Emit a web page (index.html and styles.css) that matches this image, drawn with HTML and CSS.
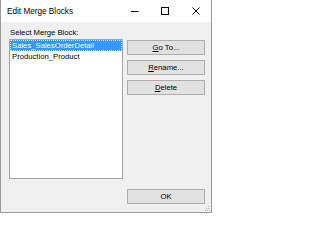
FILE: index.html
```html
<!DOCTYPE html>
<html>
<head>
<meta charset="utf-8">
<link rel="stylesheet" href="styles.css">
</head>
<body>
<div class="window">
  <div class="titlebar">
    <span class="title">Edit Merge Blocks</span>
    <div class="controls">
      <span class="ctl"><svg width="8" height="8" viewBox="0 0 8 8"><path d="M0 4.5H7.5" stroke="#000" stroke-width="1"/></svg></span>
      <span class="ctl"><svg width="9" height="9" viewBox="0 0 9 9"><rect x="0.5" y="0.5" width="7" height="7" fill="none" stroke="#000" stroke-width="1"/></svg></span>
      <span class="ctl"><svg width="9" height="9" viewBox="0 0 9 9"><path d="M0.5 0.5L7.5 7.5M7.5 0.5L0.5 7.5" stroke="#000" stroke-width="1"/></svg></span>
    </div>
  </div>
  <div class="content">
    <div class="leftcol">
      <div class="label">Select Merge Block:</div>
      <div class="listbox">
        <div class="item selected">Sales_SalesOrderDetail</div>
        <div class="item">Production_Product</div>
      </div>
    </div>
    <div class="rightcol">
      <div class="btngroup">
        <div class="btn"><u>G</u>o To...</div>
        <div class="btn"><u>R</u>ename...</div>
        <div class="btn"><u>D</u>elete</div>
      </div>
      <div class="btn">OK</div>
    </div>
  </div>
  <svg class="grip" width="5" height="5" viewBox="0 0 5 5">
    <rect x="3" y="0" width="1" height="1" fill="#b0b0b0"/>
    <rect x="1" y="2" width="1" height="1" fill="#b0b0b0"/>
    <rect x="3" y="2" width="1" height="1" fill="#b0b0b0"/>
    <rect x="0" y="4" width="1" height="1" fill="#b0b0b0"/>
    <rect x="2" y="4" width="1" height="1" fill="#b0b0b0"/>
    <rect x="4" y="4" width="1" height="1" fill="#b0b0b0"/>
  </svg>
</div>
</body>
</html>
```
FILE: styles.css
```css
html, body {
  margin: 0;
  padding: 0;
  background: #ffffff;
}
body {
  width: 214px;
  height: 214px;
  font-family: "Liberation Sans", Arial, sans-serif;
  color: #000;
}
.window {
  position: relative;
  box-sizing: border-box;
  width: 212px;
  height: 213px;
  border: 1px solid #9a9a9a;
  border-top: none;
  background: #f0f0f0;
  display: flex;
  flex-direction: column;
}
.titlebar {
  height: 22px;
  background: #ffffff;
  display: flex;
  align-items: center;
  justify-content: space-between;
  padding-left: 6px;
}
.title {
  font-size: 8.2px;
  line-height: 10px;
  padding-top: 1px;
}
.controls {
  display: flex;
  align-items: center;
  height: 22px;
}
.ctl {
  width: 31px;
  height: 22px;
  display: flex;
  align-items: center;
  justify-content: center;
}
.controls .ctl:last-child {
  width: 30px;
}
.content {
  flex: 1;
  display: flex;
  padding: 4px 6px 8px 8px;
  font-size: 7.7px;
}
.leftcol {
  display: flex;
  flex-direction: column;
  width: 114px;
}
.label {
  height: 13px;
  line-height: 13px;
  padding-left: 1px;
}
.listbox {
  box-sizing: border-box;
  width: 114px;
  height: 140px;
  background: #ffffff;
  border: 1px solid #a5a5a5;
}
.item {
  height: 11px;
  line-height: 11px;
  padding-left: 2px;
  white-space: nowrap;
}
.item.selected {
  background: #3399ff;
  color: #ffffff;
  outline: 1px dotted #cfe6ff;
  outline-offset: -1px;
}
.rightcol {
  margin-left: 4px;
  width: 78px;
  display: flex;
  flex-direction: column;
  justify-content: space-between;
  padding-top: 14px;
}
.btngroup {
  display: flex;
  flex-direction: column;
  gap: 5px;
}
.btn {
  box-sizing: border-box;
  height: 15px;
  background: #e1e1e1;
  border: 1px solid #adadad;
  display: flex;
  align-items: center;
  justify-content: center;
  line-height: 13px;
}
.btn u {
  text-decoration-thickness: 1px;
  text-underline-offset: 1px;
}
.grip {
  position: absolute;
  right: 1px;
  bottom: 1px;
}
```
